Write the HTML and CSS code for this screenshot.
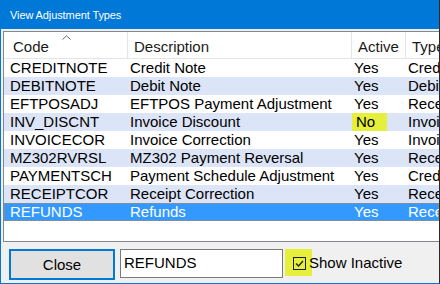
FILE: index.html
```html
<!DOCTYPE html>
<html lang="en">
<head>
    <meta charset="UTF-8">
    <title>View Adjustment Types</title>
    <link rel="stylesheet" href="styles.css">
</head>
<body>
    <div class="window">
        <div class="titlebar">View Adjustment Types</div>

        <div class="content">
            <div class="list">
                <div class="row header">
                    <div class="cell code">Code
                        <svg class="sort-arrow" width="9" height="5" viewBox="0 0 9 5">
                            <polyline points="0.5,4.5 4.5,0.8 8.5,4.5" fill="none" stroke="#6d6d6d" stroke-width="1"/>
                        </svg>
                    </div>
                    <div class="cell">Description</div>
                    <div class="cell">Active</div>
                    <div class="cell">Type</div>
                </div>

                <div class="row"><div class="cell code">CREDITNOTE</div><div class="cell">Credit Note</div><div class="cell">Yes</div><div class="cell">Credit</div></div>
                <div class="row alt"><div class="cell code">DEBITNOTE</div><div class="cell">Debit Note</div><div class="cell">Yes</div><div class="cell">Debit</div></div>
                <div class="row"><div class="cell code">EFTPOSADJ</div><div class="cell">EFTPOS Payment Adjustment</div><div class="cell">Yes</div><div class="cell">Receipt</div></div>
                <div class="row alt"><div class="cell code">INV_DISCNT</div><div class="cell">Invoice Discount</div><div class="cell"><span class="mark">No</span></div><div class="cell">Invoice</div></div>
                <div class="row"><div class="cell code">INVOICECOR</div><div class="cell">Invoice Correction</div><div class="cell">Yes</div><div class="cell">Invoice</div></div>
                <div class="row alt"><div class="cell code">MZ302RVRSL</div><div class="cell">MZ302 Payment Reversal</div><div class="cell">Yes</div><div class="cell">Receipt</div></div>
                <div class="row"><div class="cell code">PAYMENTSCH</div><div class="cell">Payment Schedule Adjustment</div><div class="cell">Yes</div><div class="cell">Credit</div></div>
                <div class="row alt"><div class="cell code">RECEIPTCOR</div><div class="cell">Receipt Correction</div><div class="cell">Yes</div><div class="cell">Receipt</div></div>
                <div class="row selected"><div class="cell code">REFUNDS</div><div class="cell">Refunds</div><div class="cell">Yes</div><div class="cell">Receipt</div></div>
            </div>

            <div class="footer">
                <button class="close-btn">Close</button>
                <div class="textbox">REFUNDS</div>
                <label class="show-inactive">
                    <span class="check-mark">
                        <svg width="13" height="13" viewBox="0 0 13 13">
                            <rect x="0.5" y="0.5" width="12" height="12" fill="none" stroke="#1e1e1e"/>
                            <polyline points="3,6.5 5.5,9 10,4" fill="none" stroke="#1e1e1e" stroke-width="1.3"/>
                        </svg>
                    </span>
                    Show Inactive
                </label>
            </div>
        </div>
    </div>
</body>
</html>
```

FILE: styles.css
```css
body {
    margin: 0;
    width: 440px;
    height: 284px;
    overflow: hidden;
    font-family: 'Liberation Sans', Arial, sans-serif;
    font-size: 15px;
    color: #000;
}

.window {
    display: flex;
    flex-direction: column;
    box-sizing: border-box;
    height: 284px;
    background: #f0f0f0;
    border-left: 1px solid #0078d7;
    border-bottom: 1px solid #0078d7;
    border-right: 1px solid #2a2a2a;
}

.titlebar {
    height: 29px;
    line-height: 30px;
    margin-left: -1px;
    padding-left: 10px;
    background: #0078d7;
    color: #fff;
    font-size: 11px;
    letter-spacing: -0.1px;
}

.content {
    flex: 1;
    padding: 2px 0 0 2px;
}

.list {
    box-sizing: border-box;
    height: 211px;
    background: #fff;
    border: 1px solid #828790;
    border-right: none;
    overflow: hidden;
}

.row {
    display: grid;
    grid-template-columns: 124px 224px 54px 1fr;
    height: 18px;
    line-height: 18px;
    white-space: nowrap;
}

.cell {
    padding-left: 2px;
    overflow: hidden;
}

.cell.code {
    padding-left: 6px;
}

.row.alt {
    background: #dce4f7;
}

.row.selected {
    background: #3399ff;
    color: #fff;
    outline: 1px dotted #c9843c;
    outline-offset: -1px;
}

.header {
    height: 27px;
    line-height: 29px;
    box-sizing: border-box;
    border-bottom: 1px solid #e5e5e5;
}

.header .cell {
    position: relative;
    padding-left: 6px;
    border-right: 1px solid #e5e5e5;
    color: #1a1a1a;
}

.header .cell.code {
    padding-left: 9px;
}

.header .cell:last-child {
    border-right: none;
}

.sort-arrow {
    position: absolute;
    left: 58px;
    top: 3px;
}

.mark {
    display: inline-block;
    margin-left: -5px;
    padding: 0 12px 0 7px;
    background: #e6ef3c;
}

.footer {
    display: flex;
    align-items: flex-start;
    padding: 7px 0 0 6px;
}

.close-btn {
    box-sizing: border-box;
    width: 106px;
    height: 31px;
    padding: 0;
    font-family: inherit;
    font-size: 15px;
    color: #000;
    background: #e1e1e1;
    border: 2px solid #0078d7;
}

.textbox {
    box-sizing: border-box;
    width: 163px;
    height: 29px;
    margin-left: 5px;
    padding: 4px 0 0 3px;
    line-height: 18px;
    background: #fff;
    border: 1px solid #7a7a7a;
}

.show-inactive {
    display: flex;
    align-items: center;
    height: 27px;
    margin-left: 2px;
}

.check-mark {
    display: flex;
    align-items: center;
    box-sizing: border-box;
    width: 27px;
    height: 27px;
    margin-right: -3px;
    padding: 1px 0 0 8px;
    background: #e6ef3c;
}
```
